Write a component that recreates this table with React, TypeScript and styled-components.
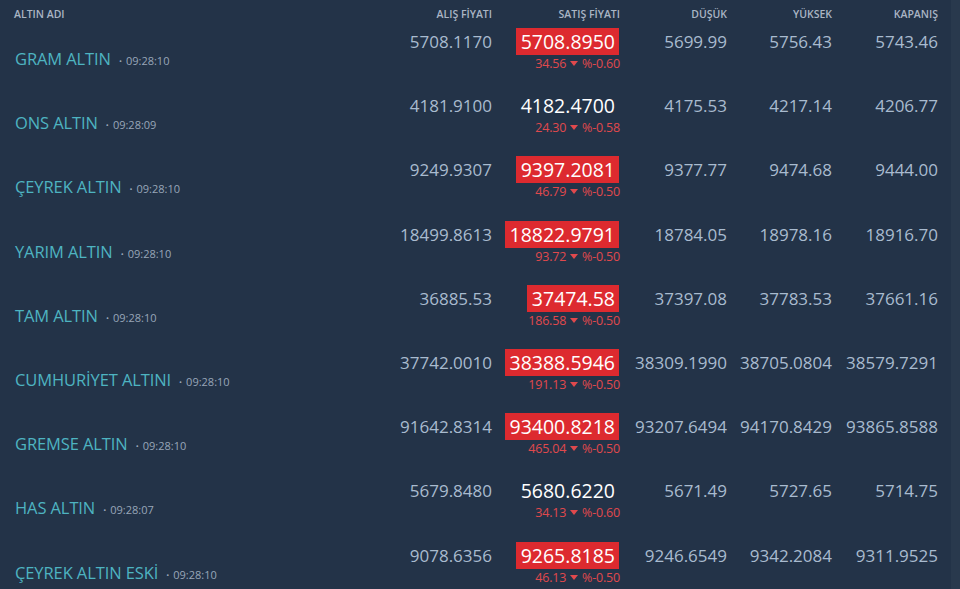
import styled, { createGlobalStyle } from "styled-components";

const GlobalStyle = createGlobalStyle`
    html, body {
        margin: 0;
        padding: 0;
        background: #28384c;
        font-family: "Open Sans", "Noto Sans", sans-serif;
    }
`;

interface GoldRow {
    name: string;
    time: string;
    buy: string;
    sell: string;
    change: string;
    percent: string;
    low: string;
    high: string;
    close: string;
    flash: boolean;
}

const rows: GoldRow[] = [
    { name: "GRAM ALTIN", time: "09:28:10", buy: "5708.1170", sell: "5708.8950", change: "34.56", percent: "%-0.60", low: "5699.99", high: "5756.43", close: "5743.46", flash: true },
    { name: "ONS ALTIN", time: "09:28:09", buy: "4181.9100", sell: "4182.4700", change: "24.30", percent: "%-0.58", low: "4175.53", high: "4217.14", close: "4206.77", flash: false },
    { name: "ÇEYREK ALTIN", time: "09:28:10", buy: "9249.9307", sell: "9397.2081", change: "46.79", percent: "%-0.50", low: "9377.77", high: "9474.68", close: "9444.00", flash: true },
    { name: "YARIM ALTIN", time: "09:28:10", buy: "18499.8613", sell: "18822.9791", change: "93.72", percent: "%-0.50", low: "18784.05", high: "18978.16", close: "18916.70", flash: true },
    { name: "TAM ALTIN", time: "09:28:10", buy: "36885.53", sell: "37474.58", change: "186.58", percent: "%-0.50", low: "37397.08", high: "37783.53", close: "37661.16", flash: true },
    { name: "CUMHURİYET ALTINI", time: "09:28:10", buy: "37742.0010", sell: "38388.5946", change: "191.13", percent: "%-0.50", low: "38309.1990", high: "38705.0804", close: "38579.7291", flash: true },
    { name: "GREMSE ALTIN", time: "09:28:10", buy: "91642.8314", sell: "93400.8218", change: "465.04", percent: "%-0.50", low: "93207.6494", high: "94170.8429", close: "93865.8588", flash: true },
    { name: "HAS ALTIN", time: "09:28:07", buy: "5679.8480", sell: "5680.6220", change: "34.13", percent: "%-0.60", low: "5671.49", high: "5727.65", close: "5714.75", flash: false },
    { name: "ÇEYREK ALTIN ESKİ", time: "09:28:10", buy: "9078.6356", sell: "9265.8185", change: "46.13", percent: "%-0.50", low: "9246.6549", high: "9342.2084", close: "9311.9525", flash: true },
];

const Page = styled.div`
    display: flex;
    height: 589px;
    overflow: hidden;
`;

const Table = styled.div`
    flex: 1;
    background: #233348;
    padding-right: 13px;
`;

const ScrollTrack = styled.div`
    width: 9px;
    background: #29394d;
`;

const Grid = styled.div`
    display: grid;
    grid-template-columns: 1fr 110px 128px 107px 105px 106px;
`;

const HeaderRow = styled(Grid)`
    height: 28px;
    align-items: center;
`;

const HeadCell = styled.div<{ $left?: boolean }>`
    font-size: 10.5px;
    font-weight: 600;
    color: #aab5c4;
    text-align: ${(p) => (p.$left ? "left" : "right")};
    padding-left: ${(p) => (p.$left ? "14px" : "0")};
    margin-top: -1px;
`;

const Row = styled(Grid)`
    height: 64.2px;
`;

const NameCell = styled.div`
    display: flex;
    align-items: baseline;
    gap: 8px;
    padding-left: 15px;
    padding-top: 19px;
`;

const Name = styled.span`
    font-size: 16.5px;
    color: #4eb4c1;
    letter-spacing: -0.1px;
`;

const Time = styled.span`
    font-size: 11px;
    color: #98a6b8;

    &::before {
        content: "•";
        font-size: 8px;
        margin-right: 4px;
        position: relative;
        top: -1px;
    }
`;

const Num = styled.div`
    font-size: 17px;
    color: #a9bbcf;
    text-align: right;
    line-height: 27px;
`;

const SellCell = styled.div`
    display: flex;
    flex-direction: column;
    align-items: flex-end;
`;

const SellPrice = styled.div<{ $flash: boolean }>`
    font-size: 19.5px;
    line-height: 27px;
    padding: 0 4px 0 5px;
    margin-right: 1px;
    color: #ffffff;
    background: ${(p) => (p.$flash ? "#dd2a2f" : "transparent")};
`;

const Change = styled.div`
    display: flex;
    align-items: center;
    gap: 4px;
    margin-top: 2px;
    font-size: 12.5px;
    line-height: 13px;
    color: #e0494d;
    letter-spacing: -0.2px;
`;

const Caret = () => (
    <svg width="8" height="5" viewBox="0 0 8 5">
        <path d="M0 0 L8 0 L4 5 Z" fill="#e0494d" />
    </svg>
);

export default function App() {
    return (
        <>
            <GlobalStyle />
            <Page>
                <Table>
                    <HeaderRow>
                        <HeadCell $left>ALTIN ADI</HeadCell>
                        <HeadCell>ALIŞ FİYATI</HeadCell>
                        <HeadCell>SATIŞ FİYATI</HeadCell>
                        <HeadCell>DÜŞÜK</HeadCell>
                        <HeadCell>YÜKSEK</HeadCell>
                        <HeadCell>KAPANIŞ</HeadCell>
                    </HeaderRow>
                    {rows.map((r) => (
                        <Row key={r.name}>
                            <NameCell>
                                <Name>{r.name}</Name>
                                <Time>{r.time}</Time>
                            </NameCell>
                            <Num>{r.buy}</Num>
                            <SellCell>
                                <SellPrice $flash={r.flash}>{r.sell}</SellPrice>
                                <Change>
                                    <span>{r.change}</span>
                                    <Caret />
                                    <span>{r.percent}</span>
                                </Change>
                            </SellCell>
                            <Num>{r.low}</Num>
                            <Num>{r.high}</Num>
                            <Num>{r.close}</Num>
                        </Row>
                    ))}
                </Table>
                <ScrollTrack />
            </Page>
        </>
    );
}
